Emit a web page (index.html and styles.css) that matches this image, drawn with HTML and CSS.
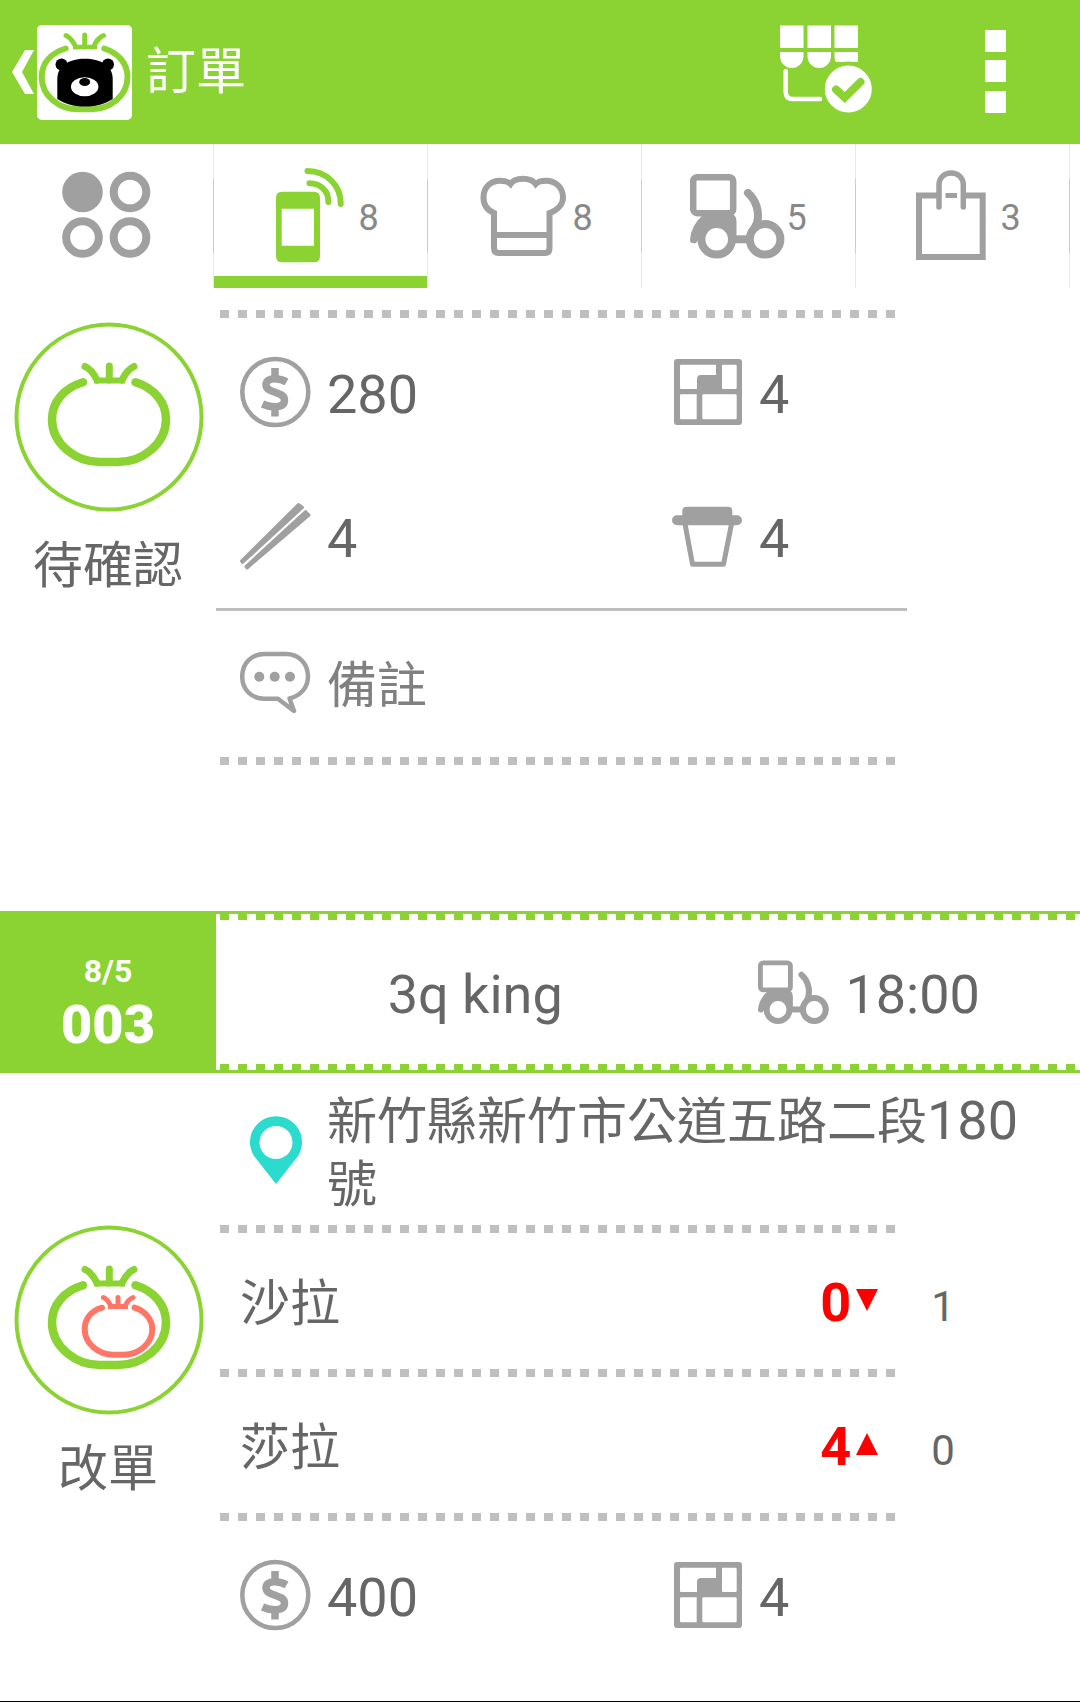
FILE: index.html
```html
<!DOCTYPE html>
<html lang="zh-Hant">
<head>
    <meta charset="UTF-8">
    <meta name="viewport" content="width=device-width, initial-scale=1.0">
    <title>訂單</title>
    <link rel="stylesheet" href="styles.css">
</head>
<body>
    <svg class="sprite" aria-hidden="true">
        <symbol id="scooter" viewBox="0 0 96 96">
            <rect x="3.2" y="9.2" width="40" height="36" rx="4" fill="none" stroke="currentColor" stroke-width="6.5"/>
            <path d="M13 47H44Q46.500 49 46.500 54V72H8L6 75Q0 76 0 72Q1 57 13 47Z" fill="currentColor"/>
            <g fill="#fff" stroke="currentColor" stroke-width="8">
                <circle cx="26.700" cy="71.300" r="15.300"/>
                <path d="M58 25C66 32 70 44 67 55L60 69" fill="none" stroke-linecap="round"/>
                <path d="M44 71.300H60" fill="none"/>
                <circle cx="75.100" cy="71.300" r="15.300"/>
            </g>
        </symbol>
        <symbol id="coin" viewBox="0 0 72 72">
            <g fill="none" stroke="currentColor">
                <circle cx="35.300" cy="36" r="33" stroke-width="4.500"/>
                <path d="M46.500 26C40 22 26 20.500 26 29C26 37.500 44.500 35 44.500 44C44.500 53 30 51.500 22.500 48M35 12V23M35 50V60.500" stroke-width="7.500"/>
            </g>
        </symbol>
        <symbol id="lunchbox" viewBox="0 0 72 72">
            <path fill="currentColor" fill-rule="evenodd" d="M5 3H67Q70 3 70 6V66Q70 69 67 69H5Q2 69 2 66V6Q2 3 5 3ZM9 8.700Q8 8.700 8 10V32Q8 33 9 33H25V23Q25 19 29 19H44V8.700ZM51 8.700Q50 8.700 50 10V32Q50 33 51 33H63.500Q64.700 33 64.700 32V10Q64.700 8.700 63.500 8.700ZM9 38.300Q8 38.300 8 39.500V62Q8 63.300 9 63.300H24.700V38.300ZM31.500 38.300Q30.300 38.300 30.300 39.500V62Q30.300 63.300 31.500 63.300H63.500Q64.700 63.300 64.700 62V39.500Q64.700 38.300 63.500 38.300Z"/>
        </symbol>
        <symbol id="chopsticks" viewBox="0 0 72 72">
            <g fill="currentColor" stroke="currentColor" stroke-width="3" stroke-linejoin="round">
                <path d="M1.500 61L58.500 4.500L62.500 7.500L2.500 62.500Z"/>
                <path d="M6 66.500L65.500 11.500L69 15L7 68Z"/>
            </g>
        </symbol>
        <symbol id="cup" viewBox="0 0 72 72">
            <path fill="currentColor" d="M15 6.700H56Q60.300 6.700 60.300 11V15.300H65A5 5 0 0 1 65 25.300H5A5 5 0 0 1 5 15.300H10.300V11Q10.300 6.700 15 6.700Z"/>
            <path fill="none" stroke="currentColor" stroke-width="5" stroke-linejoin="round" d="M13 24L20.500 64.300H51.500L59.500 24"/>
        </symbol>
        <symbol id="tomato" viewBox="0 0 192 192">
            <g fill="none" stroke="currentColor" stroke-width="8.500" stroke-linecap="round">
                <path d="M71 62.300C52 68 40 82 40 99.500C40 124 64 142 88 142H106C130 142 154 124 154 99.500C154 82 142 68 123.500 62.300"/>
                <path d="M73 46.500C79 49 82 54 85 60M97.300 46V60M122 46.500C116 49 113 54 110 60" stroke-width="7"/>
                <path d="M82 60.500H113" stroke-width="6" stroke-linecap="butt"/>
            </g>
        </symbol>
    </svg>

    <header class="app-bar">
        <a class="back" href="#" aria-label="返回">
            <svg width="25" height="48" viewBox="0 0 25 48"><path fill="#fff" d="M13 2H22L10 24L22 46H13L0 24Z"/></svg>
            <svg class="logo" width="95" height="95" viewBox="0 0 95 95">
                <g fill="none" stroke="#8bd333" stroke-width="6" stroke-linecap="round">
                    <path d="M28.700 23.500C14 28 4.700 38 4.700 52C4.700 71 22 84.300 41 84.300H54C73 84.300 90.500 71 90.500 52C90.500 38 81 28 67.300 23.500"/>
                    <path d="M29 10.500C34 12.500 36 17 39 22M47.700 10V22M66.500 10.500C61 12.500 59 17 56.500 22" stroke-width="5"/>
                    <path d="M36 22H60" stroke-width="4.500" stroke-linecap="butt"/>
                </g>
                <circle cx="24.500" cy="39.500" r="6"/>
                <circle cx="71" cy="39.500" r="6"/>
                <path d="M20.300 74V54C20.300 40 33 33.700 48 33.700S75.700 40 75.700 54V74C66 80 58 81.500 48 81.500S30 80 20.300 74Z"/>
                <ellipse cx="47.700" cy="61.700" rx="13.700" ry="9.500" fill="#fff"/>
                <ellipse cx="47.700" cy="57" rx="5.500" ry="4"/>
            </svg>
        </a>
        <h1>訂單</h1>
        <button type="button" class="action" aria-label="店家狀態">
            <svg width="100" height="100" viewBox="0 0 100 100">
                <path fill="#fff" d="M4 3.500H27.500V26H4ZM31.500 3.500H55V26H31.500ZM58.500 3.500H82V26H58.500ZM4 30H27.500V34A11.700 12 0 0 1 4 34ZM31.500 30H55V34A11.700 12 0 0 1 31.500 34ZM58.500 30H82V40H60Q58.500 38 58.500 35Z"/>
                <path fill="none" stroke="#fff" stroke-width="4.500" stroke-linecap="round" d="M9.700 49V70Q9.700 77 17 77H44"/>
                <circle cx="72.300" cy="67" r="25.500" fill="#fff" stroke="#8bd333" stroke-width="4"/>
                <path fill="none" stroke="#8bd333" stroke-width="8" stroke-linecap="round" d="M60 67.500L68.700 75.500L84.500 60"/>
            </svg>
        </button>
        <button type="button" class="action more" aria-label="更多">
            <svg width="22" height="84" viewBox="0 0 22 84" fill="#fff">
                <rect x="0" y="0" width="21" height="22" rx="1"/>
                <rect x="0" y="30" width="21" height="22" rx="1"/>
                <rect x="0" y="61" width="21" height="22" rx="1"/>
            </svg>
        </button>
    </header>

    <nav class="tabs">
        <a class="tab" href="#" aria-label="全部">
            <svg width="96" height="96" viewBox="0 0 96 96">
                <circle cx="23.500" cy="24" r="20.300" fill="currentColor"/>
                <g fill="none" stroke="currentColor" stroke-width="8">
                    <circle cx="71" cy="24" r="16.300"/>
                    <circle cx="23.500" cy="69.500" r="16.300"/>
                    <circle cx="71" cy="69.500" r="16.300"/>
                </g>
            </svg>
        </a>
        <a class="tab active" href="#" aria-current="page">
            <svg width="96" height="96" viewBox="0 0 96 96">
                <path fill="currentColor" fill-rule="evenodd" d="M20 23.700H52Q58 23.700 58 30V88Q58 94.300 52 94.300H20Q14 94.300 14 88V30Q14 23.700 20 23.700ZM19.700 40.700V77.700H52V40.700Z"/>
                <path fill="none" stroke="currentColor" stroke-width="6" stroke-linecap="round" d="M45.500 3C64 3 79 17 78.700 36M47.500 15.300C58 15.300 67 23 66.300 34"/>
            </svg>
            <span>8</span>
        </a>
        <a class="tab" href="#">
            <svg width="96" height="96" viewBox="0 0 96 96">
                <path fill="none" stroke="currentColor" stroke-width="6" d="M18 45C11 42 7.500 36 7.500 29.500C7.500 19 15 12.700 24 12.700C28 12.700 32 13.500 34.500 16C37 12 42 10.700 47 10.700S57 12 59.700 16C62 13.500 66 12.700 70 12.700C79 12.700 87 19 87 29.500C87 36 82 42 73.500 45V80Q73.500 85 69 85H22.500Q18 85 18 80ZM18 67H73.500"/>
            </svg>
            <span>8</span>
        </a>
        <a class="tab" href="#">
            <svg width="96" height="96"><use href="#scooter"/></svg>
            <span>5</span>
        </a>
        <a class="tab" href="#">
            <svg width="96" height="96" viewBox="0 0 96 96" fill="none" stroke="currentColor">
                <path stroke-width="6" d="M34 27.500H15V89H78.700V27.500H60"/>
                <path stroke-width="5.500" stroke-linecap="round" d="M35 39V17C35 1 59.300 1 59.300 17V39"/>
                <path stroke-width="5" d="M41.500 27.500H53"/>
            </svg>
            <span>3</span>
        </a>
        <a class="tab" href="#" aria-label="其他"></a>
    </nav>

    <main>
        <section class="order">
            <div class="indent"><div class="dotted"></div></div>
            <div class="order-body">
                <div class="status">
                    <svg width="192" height="192" viewBox="0 0 192 192">
                        <circle cx="97" cy="97" r="92.500" fill="none" stroke="currentColor" stroke-width="4"/>
                        <use href="#tomato"/>
                    </svg>
                    <p>待確認</p>
                </div>
                <div class="details">
                    <div class="facts">
                        <div class="fact"><svg width="72" height="72"><use href="#coin"/></svg><span>280</span></div>
                        <div class="fact"><svg width="72" height="72"><use href="#lunchbox"/></svg><span>4</span></div>
                        <div class="fact"><svg width="72" height="72"><use href="#chopsticks"/></svg><span>4</span></div>
                        <div class="fact"><svg width="72" height="72"><use href="#cup"/></svg><span>4</span></div>
                    </div>
                    <label class="fact note">
                        <svg width="72" height="72" viewBox="0 0 72 72">
                            <path fill="none" stroke="currentColor" stroke-width="4.500" stroke-linejoin="round" d="M24 7H46C59 7 68 17 68 29.500C68 41 60 49 49.500 51.500L54 64L38 51.700H24C11 51.700 2.200 42 2.200 29.500C2.200 17 11 7 24 7Z"/>
                            <g fill="currentColor"><circle cx="19.300" cy="29.700" r="5"/><circle cx="34.700" cy="29.700" r="5"/><circle cx="50" cy="29.700" r="5"/></g>
                        </svg>
                        <input type="text" placeholder="備註" aria-label="備註">
                    </label>
                    <div class="dotted"></div>
                </div>
            </div>
        </section>

        <section class="order">
            <div class="order-head">
                <div class="order-no"><span>8/5</span><strong>003</strong></div>
                <div class="order-info">
                    <div class="customer">3q king</div>
                    <div class="fact"><svg width="72" height="72"><use href="#scooter"/></svg><span>18:00</span></div>
                </div>
            </div>
            <div class="indent">
                <div class="fact address">
                    <svg class="pin" width="72" height="72" viewBox="0 0 72 72">
                        <path fill="currentColor" fill-rule="evenodd" d="M36 72L14 44A26 26 0 1 1 58 44ZM36 14A16.500 16.500 0 1 0 36 47A16.500 16.500 0 1 0 36 14Z"/>
                    </svg>
                    <p>新竹縣新竹市公道五路二段<span>180</span>號</p>
                </div>
            </div>
            <div class="order-body">
                <div class="status">
                    <svg width="192" height="192" viewBox="0 0 192 192">
                        <circle cx="97" cy="97" r="92.500" fill="none" stroke="currentColor" stroke-width="4"/>
                        <use href="#tomato"/>
                        <g fill="none" stroke="#ff7566" stroke-width="6" stroke-linecap="round">
                            <path d="M90 84.700C79 88 72.700 96 72.700 106.300C72.700 121 87 131.700 101 131.700H112C126 131.700 140.300 121 140.300 106.300C140.300 96 133 88 122.500 84.700"/>
                            <path d="M91.500 74.500C95 76 97 79 99 83M106 74.500V83M121 74.500C117 76 115 79 113 83" stroke-width="5"/>
                            <path d="M96 83.500H116" stroke-width="5" stroke-linecap="butt"/>
                        </g>
                    </svg>
                    <p>改單</p>
                </div>
                <div class="details">
                    <div class="dotted"></div>
                    <div class="item">
                        <span class="name">沙拉</span>
                        <strong>0<svg width="22" height="22" viewBox="0 0 22 22"><path fill="currentColor" d="M0 0H22L11 22Z"/></svg></strong>
                        <span class="before">1</span>
                    </div>
                    <div class="dotted"></div>
                    <div class="item">
                        <span class="name">莎拉</span>
                        <strong>4<svg width="22" height="22" viewBox="0 0 22 22"><path fill="currentColor" d="M0 22H22L11 0Z"/></svg></strong>
                        <span class="before">0</span>
                    </div>
                    <div class="dotted"></div>
                    <div class="facts">
                        <div class="fact"><svg width="72" height="72"><use href="#coin"/></svg><span>400</span></div>
                        <div class="fact"><svg width="72" height="72"><use href="#lunchbox"/></svg><span>4</span></div>
                    </div>
                </div>
            </div>
        </section>
    </main>
</body>
</html>
```

FILE: styles.css
```css
:root {
    --green: #8bd333;
    --icon-gray: #a0a0a0;
    --line-gray: #bfbfbf;
    --text: #666;
    --cjk: 50px;
    --latin: 54px;
}
* { box-sizing: border-box; }
body {
    font-family: Roboto, "Noto Sans CJK TC", sans-serif;
    font-size: var(--latin);
    line-height: 64px;
    margin: 0;
    min-height: 100vh;
    background-color: #fff;
    color: var(--text);
    border-bottom: 1px solid #000;
}
p { margin: 0; }
svg { display: block; flex: none; }
.sprite { position: absolute; width: 0; height: 0; }

/* top bar */
.app-bar {
    display: flex;
    align-items: center;
    height: 144px;
    padding: 0 36px 0 12px;
    background-color: var(--green);
    color: #fff;
}
.back { display: flex; align-items: center; }
.logo { background-color: #fff; border-radius: 5px; }
h1 { flex: 1; margin: 0 0 0 14px; font-size: var(--cjk); font-weight: 400; }
.action { padding: 0; border: none; background: none; cursor: pointer; }
.more { display: flex; justify-content: center; width: 96px; margin-left: 72px; }

/* tabs scroll sideways */
.tabs { display: flex; height: 144px; overflow: hidden; }
.tab {
    flex: 0 0 214px;
    display: flex;
    align-items: center;
    justify-content: center;
    border-right: 1px solid #e6e6e6;
    border-image: linear-gradient(#e8e8e8 36px, #ccc 36px, #ccc 108px, #e8e8e8 108px) 1;
    color: var(--icon-gray);
    font-size: 36px;
    text-decoration: none;
}
.tab span { padding-top: 4px; color: #888; }
.active { color: var(--green); box-shadow: inset 0 -12px var(--green); }

/* orders */
main { padding-top: 20px; }
.order { margin-bottom: 144px; }
.order:last-child { margin-bottom: 0; }
.indent { margin-left: 20%; }
.order-body { display: grid; grid-template-columns: 20% 80%; }
.dotted {
    width: calc(80% - 16px);
    height: 8px;
    margin: 2px 4px;
    background: repeating-linear-gradient(90deg, var(--line-gray) 0 9px, transparent 9px 18px);
}
.status { display: flex; flex-direction: column; align-items: center; color: var(--green); }
.status p { margin-top: 22px; font-size: var(--cjk); color: var(--text); }

.facts { display: grid; grid-template-columns: 1fr 1fr; }
.fact { display: flex; align-items: center; gap: 15px; height: 144px; padding: 0 24px; }
.fact svg { color: var(--icon-gray); }
.fact span, .note input, .customer { padding: 5px 0 0; }
.note { width: 80%; height: 147px; border-top: 3px solid var(--line-gray); }
.note input {
    flex: 1;
    min-width: 0;
    border: none;
    outline: none;
    background: none;
    font: inherit;
    font-size: var(--cjk);
    color: var(--text);
}
.note input::placeholder { color: #808080; }

.order-head {
    display: grid;
    grid-template-columns: 20% 80%;
    border: solid var(--green);
    border-width: 3px 0;
}
.order-no {
    display: flex;
    flex-direction: column;
    align-items: center;
    justify-content: center;
    padding-top: 18px;
    background-color: var(--green);
    color: #fff;
    font-weight: 700;
    line-height: 60px;
}
.order-no span { font-size: 32px; line-height: 48px; }
.order-info {
    display: grid;
    grid-template-columns: 60% 40%;
    align-items: center;
    height: 156px;
    background:
        linear-gradient(90deg, var(--green) 9px, transparent 9px) 4px 0 / 18px 6px repeat-x,
        linear-gradient(90deg, var(--green) 9px, transparent 9px) 4px 100% / 18px 6px repeat-x;
}
.customer { text-align: center; }
.address { height: auto; min-height: 150px; }
.address p { padding-top: 10px; font-size: var(--cjk); line-height: 63px; }
.address span { font-size: var(--latin); }
.address .pin { color: #2adbce; }

.item {
    display: grid;
    grid-template-columns: 1fr auto 20%;
    align-items: baseline;
    height: 132px;
    padding-top: 36px;
}
.name { padding-left: 24px; font-size: var(--cjk); }
.item strong { padding-right: 29px; color: #f00; }
.item strong svg { display: inline-block; margin-left: 5px; vertical-align: 10px; }
.before { padding-left: 24px; font-size: 42px; }
```
